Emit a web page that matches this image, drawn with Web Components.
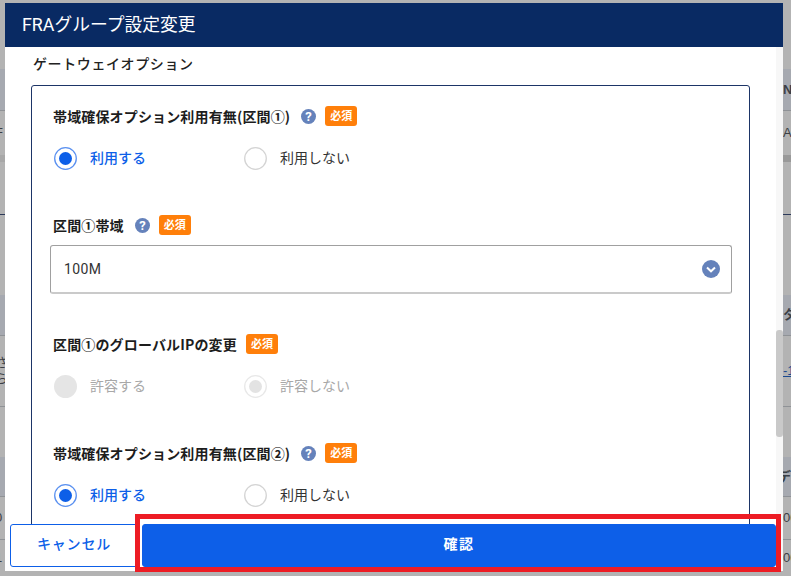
<!DOCTYPE html>
<html lang="ja">
<head>
<meta charset="utf-8">
<title>FRAグループ設定変更</title>
<style>
  html, body { margin: 0; height: 100%; overflow: hidden; background: #b3b3b3; }
  body { font-family: Roboto, "Noto Sans CJK JP", sans-serif; }
</style>
</head>
<body>
<bg-table></bg-table>
<fra-modal heading="FRAグループ設定変更">
  <option-panel legend="ゲートウェイオプション">
    <form-field label="帯域確保オプション利用有無(区間①)" help required>
      <radio-row>
        <radio-opt checked>利用する</radio-opt>
        <radio-opt>利用しない</radio-opt>
      </radio-row>
    </form-field>
    <form-field label="区間①帯域" help required>
      <select-box value="100M"></select-box>
    </form-field>
    <form-field label="区間①のグローバルIPの変更" required>
      <radio-row>
        <radio-opt disabled>許容する</radio-opt>
        <radio-opt disabled dot>許容しない</radio-opt>
      </radio-row>
    </form-field>
    <form-field label="帯域確保オプション利用有無(区間②)" help required>
      <radio-row>
        <radio-opt checked>利用する</radio-opt>
        <radio-opt>利用しない</radio-opt>
      </radio-row>
    </form-field>
  </option-panel>
</fra-modal>
<script>
// Dimmed page behind the dialog, only its edges show
class BgTable extends HTMLElement {
  constructor() {
    super();
    this.attachShadow({ mode: 'open' });
    const rows = [
      [69, ''], [42, 'head line', '', 'N'], [44, '', 'F', 'A'], [7, 'band'], [53, 'dark'], [80, ''],
      [41, 'head line', '', 'タ'], [71, 'line', 'さ<br>ら', '<u>-1</u>'], [50, ''],
      [40, 'head line', '', '<span class="cut">デー</span>'],
      [43, 'line', '0', '00'], [36, '', '1', '00']
    ];
    this.shadowRoot.innerHTML = `
      <style>
        :host { display: block; font: 13px/16px "Liberation Sans", "Noto Sans CJK JP", sans-serif; color: #3c3f45; }
        .row { display: flex; justify-content: space-between; align-items: center; box-sizing: border-box; overflow: hidden; }
        .head { background: #a6a9b0; font-weight: bold; }
        .band { background: linear-gradient(to right, #a8a8a8 5px, #b3b3b3 5px, #b3b3b3 783px, #999 783px); }
        .line { border-bottom: 1px solid #8f9296; }
        .dark { border-bottom: 1px solid #2c3a5a; }
        .l { margin-left: -5px; width: 10px; }
        .r { width: 8px; overflow: hidden; white-space: nowrap; }
        .cut { display: inline-block; margin-left: -5px; }
        u { color: #1a4a90; }
      </style>
      ${rows.map(([h, cls, l, r]) => `
        <div class="row ${cls}" style="height:${h}px">
          <span class="l">${l || ''}</span><span class="r">${r || ''}</span>
        </div>`).join('')}
    `;
  }
}

class FraModal extends HTMLElement {
  constructor() {
    super();
    this.attachShadow({ mode: 'open' });
    this.shadowRoot.innerHTML = `
      <style>
        :host {
          position: absolute; left: 5px; top: 3px; width: 778px; height: 568px;
          display: flex; flex-direction: column; background: #fff;
          font-family: Roboto, "Noto Sans CJK JP", sans-serif;
        }
        header {
          height: 44px; flex: none; background: #092a63; color: #fff;
          font-size: 17.8px; line-height: 43px; padding-left: 17px;
        }
        .scroll { flex: 1; min-height: 0; overflow: hidden; }
        .track { position: absolute; right: 0; top: 44px; bottom: 0; width: 7px; background: #f7f7f7; }
        .thumb { position: absolute; left: 0; right: 0; top: 283px; height: 107px; background: #c9c9c9; border-radius: 3px; }
        footer {
          flex: none; height: 43px; position: relative;
          display: flex; gap: 4px; padding: 0 7px 4px 5px;
        }
        button {
          font: 500 14px Roboto, "Noto Sans CJK JP", sans-serif; border-radius: 3px;
          box-sizing: border-box; height: 43px; letter-spacing: .8px; padding: 0 0 5px;
        }
        .cancel { width: 128px; flex: none; background: #fff; color: #0d5fe8; border: 1px solid #0d5fe8; }
        .ok { flex: 1; background: #0d5fe8; color: #fff; border: 1px solid #0d5fe8; font-weight: 700; letter-spacing: 1.5px; }
        /* red annotation box from the manual this shot came from */
        .mark {
          position: absolute; left: 130px; top: 511px; width: 646px; height: 58px;
          box-sizing: border-box; border: 5px solid #ed1c24; pointer-events: none;
        }
      </style>
      <header>${this.getAttribute('heading')}</header>
      <div class="scroll"><slot></slot></div>
      <div class="track"><div class="thumb"></div></div>
      <footer>
        <button class="cancel">キャンセル</button>
        <button class="ok">確認</button>
      </footer>
      <div class="mark"></div>
    `;
  }
}

class OptionPanel extends HTMLElement {
  constructor() {
    super();
    this.attachShadow({ mode: 'open' });
    this.shadowRoot.innerHTML = `
      <style>
        :host { display: block; padding: 8px 0 0 26px; }
        h2 { margin: 0 0 12px 2px; font-size: 14px; line-height: 18px; font-weight: 500; color: #222; letter-spacing: .6px; }
        .box {
          width: 719px; box-sizing: border-box; height: 600px;
          border: 1px solid #1d3567; border-radius: 3px; padding: 20px 18px 0 18px;
          display: flex; flex-direction: column;
        }
      </style>
      <h2>${this.getAttribute('legend')}</h2>
      <div class="box"><slot></slot></div>
    `;
  }
}

class FormField extends HTMLElement {
  constructor() {
    super();
    this.attachShadow({ mode: 'open' });
    const help = this.hasAttribute('help') ? `
      <svg width="15" height="15" viewBox="0 0 15 15">
        <circle cx="7.5" cy="7.5" r="7.5" fill="#6582bb"/>
        <text x="7.5" y="12.2" text-anchor="middle" font-size="13" font-weight="700" font-family="Roboto, sans-serif" fill="#fff">?</text>
      </svg>` : '';
    const req = this.hasAttribute('required') ? `<span class="req">必須</span>` : '';
    this.shadowRoot.innerHTML = `
      <style>
        :host { display: block; }
        .label { display: flex; align-items: center; gap: 9px; height: 20px; padding-left: 3px; margin-bottom: 10px; }
        .text { font-size: 14px; letter-spacing: .15px; font-weight: 700; font-family: "Noto Sans CJK JP", sans-serif; color: #1d1d1d; }
        .req {
          background: #ff7f0a; color: #fff; font-size: 11px; font-weight: 700;
          width: 32px; height: 20px; line-height: 19px; text-align: center; border-radius: 3px;
          font-family: "Noto Sans CJK JP", sans-serif;
        }
        svg { flex: none; margin-left: 2px; }
      </style>
      <div class="label"><span class="text">${this.getAttribute('label')}</span>${help}${req}</div>
      <slot></slot>
    `;
  }
}

class RadioRow extends HTMLElement {
  constructor() {
    super();
    this.attachShadow({ mode: 'open' });
    this.shadowRoot.innerHTML = `
      <style>:host { display: grid; grid-template-columns: 190px 1fr; padding: 10px 0 45px 4px; }</style>
      <slot></slot>
    `;
  }
}

class RadioOpt extends HTMLElement {
  constructor() {
    super();
    this.attachShadow({ mode: 'open' });
    const checked = this.hasAttribute('checked');
    const disabled = this.hasAttribute('disabled');
    const dot = this.hasAttribute('dot');
    let ring = '<circle cx="11.5" cy="11.5" r="10.8" fill="#fff" stroke="#d4d4d4" stroke-width="1.3"/>';
    if (checked) {
      ring = '<circle cx="11.5" cy="11.5" r="10.8" fill="#fff" stroke="#5b91f0" stroke-width="1.3"/><circle cx="11.5" cy="11.5" r="6.5" fill="#0d5fe8"/>';
    } else if (disabled && dot) {
      ring = '<circle cx="11.5" cy="11.5" r="10.8" fill="#fff" stroke="#e8e8e8" stroke-width="1.3"/><circle cx="11.5" cy="11.5" r="6.5" fill="#e3e3e3"/>';
    } else if (disabled) {
      ring = '<circle cx="11.5" cy="11.5" r="11.5" fill="#e5e5e5"/>';
    }
    const color = disabled ? '#a8a8a8' : checked ? '#0d5fe8' : '#333';
    this.shadowRoot.innerHTML = `
      <style>
        :host { display: flex; align-items: center; gap: 13px; height: 24px; color: ${color}; }
        span { font-size: 14px; font-weight: ${checked ? 500 : 400}; margin-top: -2px; }
      </style>
      <svg width="23" height="23" viewBox="0 0 23 23">${ring}</svg>
      <span><slot></slot></span>
    `;
  }
}

class SelectBox extends HTMLElement {
  constructor() {
    super();
    this.attachShadow({ mode: 'open' });
    this.shadowRoot.innerHTML = `
      <style>
        :host {
          display: flex; align-items: center; justify-content: space-between;
          box-sizing: border-box; width: 682px; height: 49px; margin: 0 0 40px;
          border: 1px solid #a0a0a0; border-bottom: 2px solid #cacaca; border-radius: 3px;
          padding: 0 11px 0 13px; font-size: 14px; color: #333; letter-spacing: .4px;
        }
        svg { flex: none; }
      </style>
      <span>${this.getAttribute('value')}</span>
      <svg width="18" height="18" viewBox="0 0 18 18">
        <circle cx="9" cy="9" r="9" fill="#6582bb"/>
        <path d="M5 7.5 L9 11.3 L13 7.5" fill="none" stroke="#fff" stroke-width="2"/>
      </svg>
    `;
  }
}

customElements.define('bg-table', BgTable);
customElements.define('fra-modal', FraModal);
customElements.define('option-panel', OptionPanel);
customElements.define('form-field', FormField);
customElements.define('radio-row', RadioRow);
customElements.define('radio-opt', RadioOpt);
customElements.define('select-box', SelectBox);
</script>
</body>
</html>
